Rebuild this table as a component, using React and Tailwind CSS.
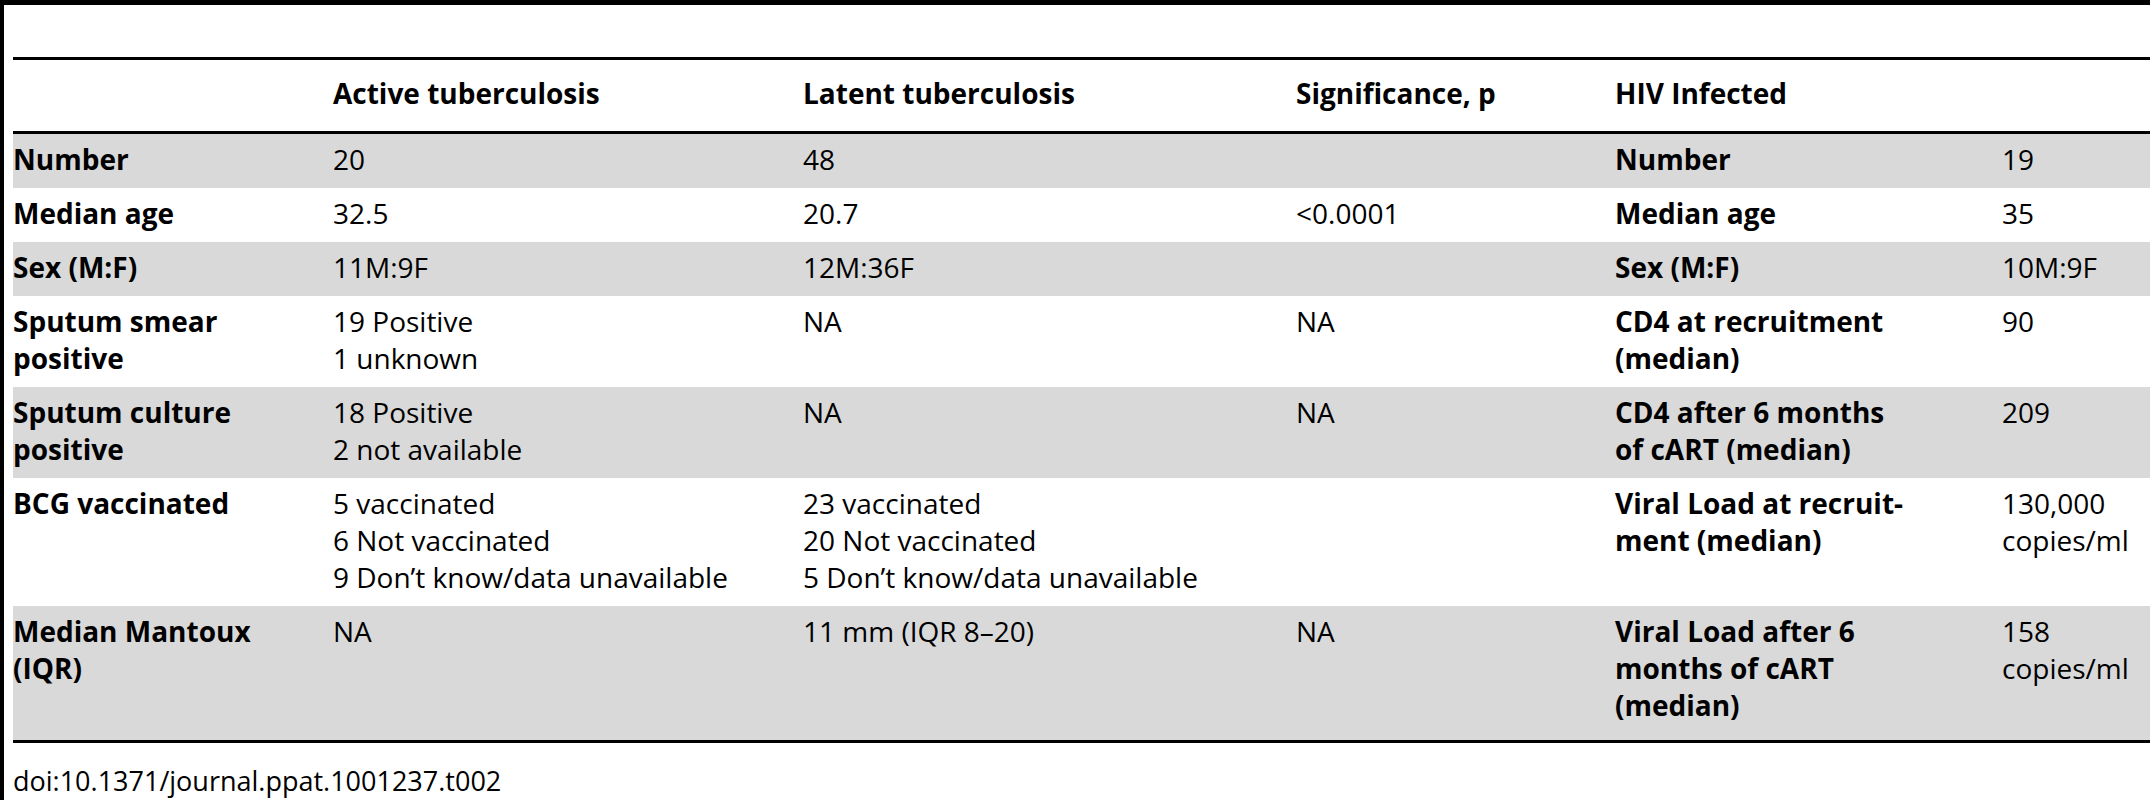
import React from "react";

const rows = [
  {
    bg: "bg-[#d9d9d9]",
    label: ["Number"],
    active: ["20"],
    latent: ["48"],
    sig: [],
    hivLabel: ["Number"],
    hivValue: ["19"],
  },
  {
    bg: "bg-white",
    label: ["Median age"],
    active: ["32.5"],
    latent: ["20.7"],
    sig: ["<0.0001"],
    hivLabel: ["Median age"],
    hivValue: ["35"],
  },
  {
    bg: "bg-[#d9d9d9]",
    label: ["Sex (M:F)"],
    active: ["11M:9F"],
    latent: ["12M:36F"],
    sig: [],
    hivLabel: ["Sex (M:F)"],
    hivValue: ["10M:9F"],
  },
  {
    bg: "bg-white",
    label: ["Sputum smear", "positive"],
    active: ["19 Positive", "1 unknown"],
    latent: ["NA"],
    sig: ["NA"],
    hivLabel: ["CD4 at recruitment", "(median)"],
    hivValue: ["90"],
  },
  {
    bg: "bg-[#d9d9d9]",
    label: ["Sputum culture", "positive"],
    active: ["18 Positive", "2 not available"],
    latent: ["NA"],
    sig: ["NA"],
    hivLabel: ["CD4 after 6 months", "of cART (median)"],
    hivValue: ["209"],
  },
  {
    bg: "bg-white",
    label: ["BCG vaccinated"],
    active: ["5 vaccinated", "6 Not vaccinated", "9 Don\u2019t know/data unavailable"],
    latent: ["23 vaccinated", "20 Not vaccinated", "5 Don\u2019t know/data unavailable"],
    sig: [],
    hivLabel: ["Viral Load at recruit-", "ment (median)"],
    hivValue: ["130,000", "copies/ml"],
  },
  {
    bg: "bg-[#d9d9d9]",
    last: true,
    label: ["Median Mantoux", "(IQR)"],
    active: ["NA"],
    latent: ["11 mm (IQR 8\u201320)"],
    sig: ["NA"],
    hivLabel: ["Viral Load after 6", "months of cART", "(median)"],
    hivValue: ["158", "copies/ml"],
  },
];

function Lines({ lines, bold }) {
  return (
    <div className={"whitespace-nowrap " + (bold ? "font-bold" : "font-normal")}>
      {lines.map((l, i) => (
        <div key={i}>{l}</div>
      ))}
    </div>
  );
}

const grid = "grid grid-cols-[320px_470px_493px_319px_387px_1fr]";

export default function App() {
  return (
    <div
      className="w-[2150px] h-[800px] overflow-hidden bg-white text-black border-l-[4px] border-black flex flex-col"
      style={{ fontFamily: '"Open Sans", "Noto Sans", sans-serif' }}
    >
      <div className="h-[5px] bg-black shrink-0" />
      <div className="pl-[9px] flex flex-col text-[28px] leading-[37px]">
        <div className="h-[52px]" />
        <div className="h-[3px] bg-black" />
        <div className={grid + " pt-[15px] pb-[19px] font-bold"}>
          <div />
          <div>Active tuberculosis</div>
          <div>Latent tuberculosis</div>
          <div>Significance, p</div>
          <div>HIV Infected</div>
          <div />
        </div>
        <div className="h-[3px] bg-black" />
        {rows.map((r, i) => (
          <div
            key={i}
            className={
              grid +
              " " +
              r.bg +
              " pt-[7px] " +
              (r.last ? "pb-[16px]" : "pb-[10px]")
            }
          >
            <Lines lines={r.label} bold />
            <Lines lines={r.active} />
            <Lines lines={r.latent} />
            <Lines lines={r.sig} />
            <Lines lines={r.hivLabel} bold />
            <Lines lines={r.hivValue} />
          </div>
        ))}
        <div className="h-[3px] bg-black" />
        <div className="pt-[19px] text-[27px] leading-[37px]">doi:10.1371/journal.ppat.1001237.t002</div>
      </div>
    </div>
  );
}
